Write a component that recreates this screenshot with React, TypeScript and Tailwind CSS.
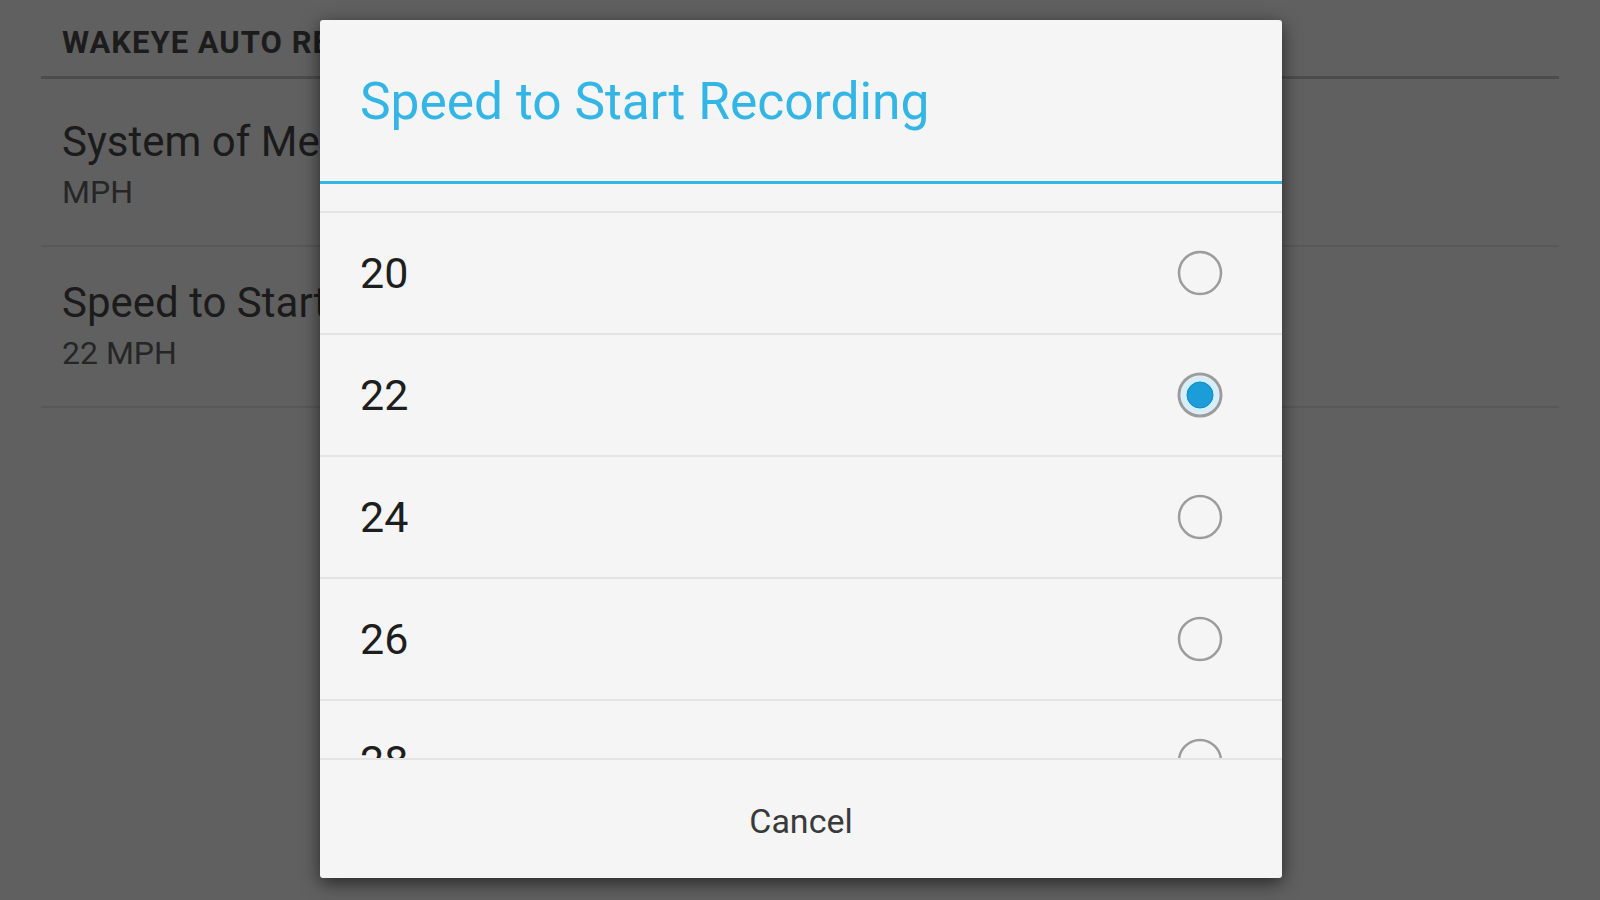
/**
 * Settings screen (dimmed) with the "Speed to Start Recording" single-choice dialog on top.
 */
const SPEEDS = [18, 20, 22, 24, 26, 28, 30];
const SELECTED = 22;

function Radio({ checked }: { checked: boolean }) {
  return (
    <svg width="48" height="48" viewBox="0 0 48 48" aria-hidden>
      {checked && <circle cx="24" cy="24" r="19" fill="#d4effa" />}
      <circle cx="24" cy="24" r="21" fill="none" stroke="#9c9c9c" strokeWidth={checked ? 3 : 2.5} />
      {checked && <circle cx="24" cy="24" r="13" fill="#1a9dd9" stroke="#1488c0" strokeWidth="1" />}
    </svg>
  );
}

function SettingRow({ title, summary, top }: { title: string; summary: string; top: string }) {
  return (
    <div className={`flex flex-col border-b-2 border-[#585858] pb-[35px] pl-[21px] ${top}`}>
      <div className="whitespace-nowrap text-[42px] leading-[48px] text-[#1b1b1b]">{title}</div>
      <div className="mt-[8px] whitespace-nowrap text-[32px] leading-[36px] text-[#262626]">{summary}</div>
    </div>
  );
}

export default function App() {
  return (
    <div className="relative h-[900px] w-[1600px] overflow-hidden bg-[#606060] font-['Roboto','Liberation_Sans',sans-serif]">
      {/* dimmed preference screen */}
      <div className="flex flex-col px-[41px] pt-[26px]">
        <div className="whitespace-nowrap pb-[16px] pl-[21px] text-[31px] font-bold leading-[34px] tracking-[1px] text-[#1c1c1c]">
          WAKEYE AUTO RECORDING
        </div>
        <div className="h-[3px] bg-[#4c4c4c]" />
        <SettingRow title="System of Measurement" summary="MPH" top="pt-[39px]" />
        <SettingRow title="Speed to Start Recording" summary="22 MPH" top="pt-[32px]" />
      </div>

      {/* dialog */}
      <div className="absolute left-[320px] top-[20px] flex h-[858px] w-[962px] flex-col rounded-[3px] bg-[#f5f5f5] shadow-[0_5px_18px_rgba(0,0,0,0.6)]">
        <div className="h-[161px] shrink-0 whitespace-nowrap pl-[40px] pt-[54px] text-[51.5px] leading-[56px] text-[#33b5e5]">
          Speed to Start Recording
        </div>
        <div className="h-[3px] shrink-0 bg-[#33b5e5]" />
        <div className="h-[574px] shrink-0 overflow-hidden">
          <div className="-mt-[95px] flex flex-col">
            {SPEEDS.map((s) => (
              <div
                key={s}
                className="flex h-[122px] shrink-0 items-center justify-between border-t-2 border-[#e4e4e4] pl-[40px] pr-[58px]"
              >
                <span className="text-[43px] leading-[50px] text-[#1e1e1e]">{s}</span>
                <Radio checked={s === SELECTED} />
              </div>
            ))}
          </div>
        </div>
        <div className="flex flex-1 items-center justify-center border-t-2 border-[#e4e4e4] pt-[4px]">
          <span className="text-[34px] leading-[40px] text-[#3a3a3a]">Cancel</span>
        </div>
      </div>
    </div>
  );
}
